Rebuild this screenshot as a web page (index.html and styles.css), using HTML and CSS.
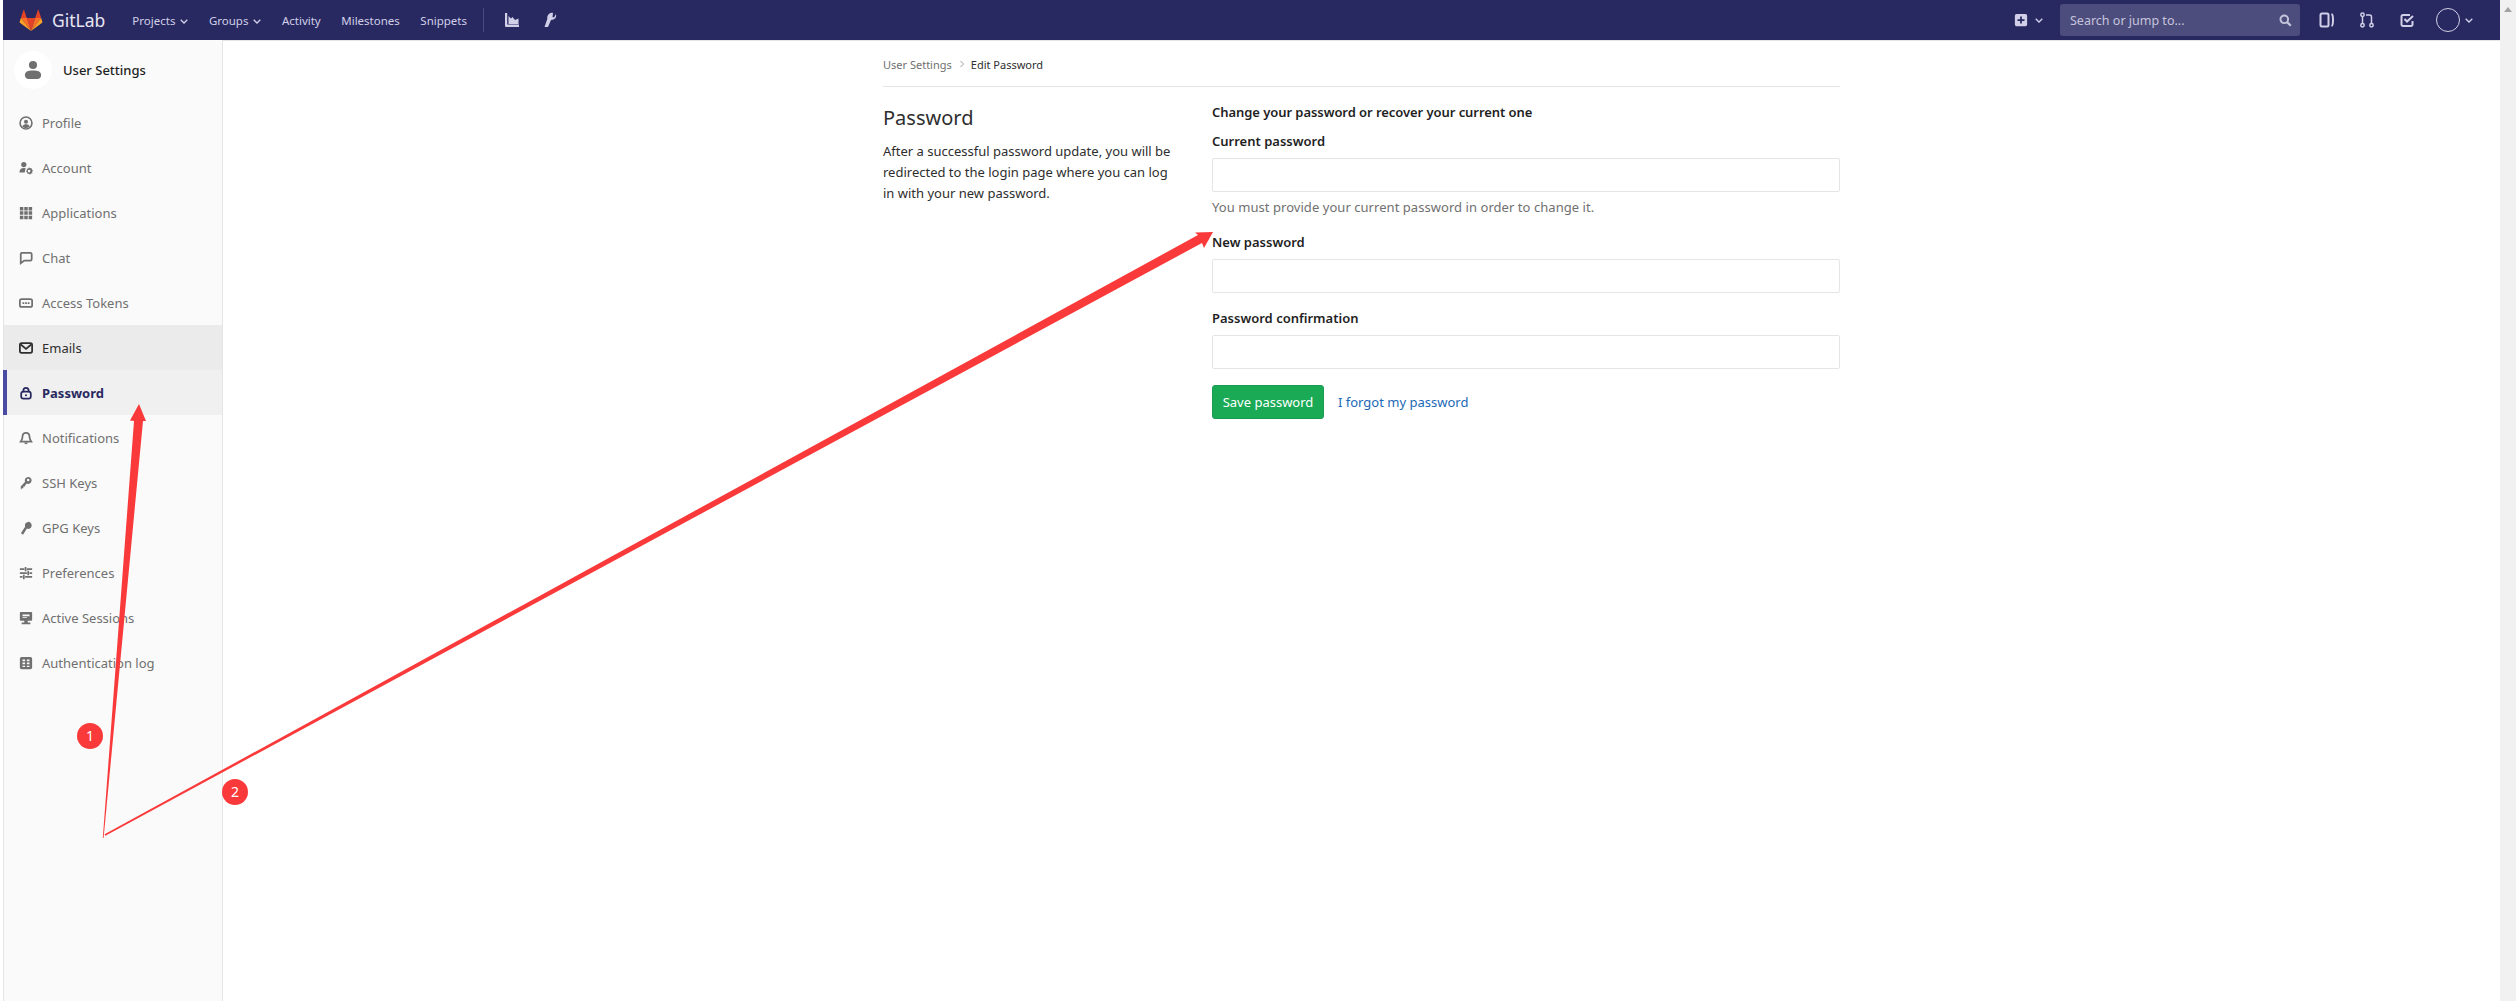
FILE: index.html
```html
<!DOCTYPE html>
<html lang="en">

<head>
    <meta charset="UTF-8">
    <title>Edit Password</title>
    <link rel="stylesheet" href="styles.css">
</head>

<body>
    <header class="navbar">
        <a class="brand">
            <svg class="brand__logo" viewBox="0 0 24 23" width="24" height="22">
                <path fill="#e24329" d="M12 23 16.400 9.400H7.600z" />
                <path fill="#fc6d26" d="M12 23 7.600 9.400H1.400z" />
                <path fill="#fca326" d="M1.400 9.400.1 13.500c-.1.4 0 .8.3 1L12 23z" />
                <path fill="#e24329" d="M1.400 9.400h6.200L4.900 1.200c-.1-.4-.7-.4-.9 0z" />
                <path fill="#fc6d26" d="M12 23l4.400-13.600h6.200z" />
                <path fill="#fca326" d="M22.600 9.400l1.300 4.100c.1.400 0 .8-.3 1L12 23z" />
                <path fill="#e24329" d="M22.600 9.400h-6.200l2.700-8.200c.1-.4.700-.4.900 0z" />
            </svg>
            <span class="brand__name">GitLab</span>
        </a>
        <nav class="nav__links">
            <a>Projects <svg class="chev" viewBox="0 0 8 5"><path d="M.7.8 4 4 7.300.8" /></svg></a>
            <a>Groups <svg class="chev" viewBox="0 0 8 5"><path d="M.7.8 4 4 7.300.8" /></svg></a>
            <a>Activity</a>
            <a>Milestones</a>
            <a>Snippets</a>
        </nav>
        <div class="nav__tools">
            <svg viewBox="0 0 16 16" width="16" height="16"><path fill="#d1d0e8" d="M1 1h2.200v11.500H15V15H2a1 1 0 0 1-1-1z" /><path fill="#d1d0e8" d="M4.500 4l2.500 2.500 1.500-1.500 2.500 3 3.500-1.500v5.500H4.500z" /></svg>
            <svg viewBox="0 0 16 16" width="16" height="16"><path fill="#d1d0e8" d="M8.500 1.500c1-.7 2.500-1 3.500-.5L11.500 5l1.500.5L15 2c.5 2 0 4.500-2.500 5.500L10 8l-3 7H3.500l2.800-8C6 5 6.500 3 8.500 1.500z" /></svg>
        </div>
        <div class="nav__right">
            <svg class="nav__plus" viewBox="0 0 16 16" width="14" height="14"><path fill="#d1d0e8" fill-rule="evenodd" d="M3 1h10a2 2 0 0 1 2 2v10a2 2 0 0 1-2 2H3a2 2 0 0 1-2-2V3a2 2 0 0 1 2-2zm4 3v3H4v2h3v3h2V9h3V7H9V4z" /></svg>
            <svg class="chev" viewBox="0 0 8 5"><path d="M.7.8 4 4 7.300.8" /></svg>
            <div class="search">
                <span>Search or jump to...</span>
                <svg viewBox="0 0 16 16" width="13" height="13"><circle cx="6.500" cy="6.500" r="4.700" fill="none" stroke="#c5c4dc" stroke-width="2.400" /><path d="M10 10l4.500 4.500" stroke="#c5c4dc" stroke-width="2.800" /></svg>
            </div>
            <svg class="nav__icon" viewBox="0 0 16 16" width="16" height="16"><rect x="1.500" y="1.500" width="8" height="13" rx="1.500" fill="none" stroke="#d1d0e8" stroke-width="2" /><path d="M12.500 2c2 .5 2 11.500 0 12" fill="none" stroke="#d1d0e8" stroke-width="2" /></svg>
            <svg class="nav__icon" viewBox="0 0 16 16" width="16" height="16"><g fill="none" stroke="#d1d0e8" stroke-width="1.500"><circle cx="3.500" cy="2.800" r="1.700" /><circle cx="3.500" cy="13.200" r="1.700" /><circle cx="12.500" cy="13.200" r="1.700" /><path d="M3.500 4.500v7M12.500 11.500V5c0-1-.5-2-2-2H7" /></g></svg>
            <svg class="nav__icon nav__icon--last" viewBox="0 0 16 16" width="16" height="16"><path d="M13.500 9v3.500a1.500 1.500 0 0 1-1.500 1.500H4a1.500 1.500 0 0 1-1.500-1.500v-8A1.500 1.500 0 0 1 4 3h7" fill="none" stroke="#d1d0e8" stroke-width="2" /><path d="M5.500 7l2.500 2.500L14 4" fill="none" stroke="#d1d0e8" stroke-width="2" /></svg>
            <span class="avatar"></span>
            <svg class="chev" viewBox="0 0 8 5"><path d="M.7.8 4 4 7.300.8" /></svg>
        </div>
    </header>

    <div class="layout">
        <aside class="sidebar">
            <div class="sidebar__head">
                <span class="sidebar__avatar">
                    <svg viewBox="0 0 20 20" width="18" height="18"><circle cx="10" cy="4.500" r="4.500" fill="#707070" /><path fill="#707070" d="M1 15.500C1 12 4 10.500 10 10.500s9 1.500 9 5c0 3-2 4.500-4 4.500H5c-2 0-4-1.500-4-4.500z" /></svg>
                </span>
                <strong>User Settings</strong>
            </div>
            <ul class="menu">
                <li><svg viewBox="0 0 16 16"><circle cx="8" cy="8" r="6.800" fill="none" stroke="currentColor" stroke-width="1.800" /><circle cx="8" cy="6.500" r="2.300" /><path d="M3.800 12c1-2 2.500-2.500 4.200-2.500s3.200.5 4.200 2.500c-1 1-2.500 1.800-4.200 1.800s-3.200-.8-4.200-1.800z" /></svg>Profile</li>
                <li><svg viewBox="0 0 16 16"><circle cx="5.500" cy="4" r="3" /><path d="M.5 13c0-3.500 2-5 5-5 1 0 1.500.2 2 .4L6.500 13z" /><path fill-rule="evenodd" d="M11.500 7l1 1.400 1.700-.3.500 1.700 1.300 1-1 1.400.3 1.700-1.700.5-1 1.400-1.100-1.300-1.700.2-.4-1.700-1.400-1 1-1.300-.2-1.700 1.700-.4zm0 3a1.500 1.500 0 1 0 0 3 1.500 1.500 0 0 0 0-3z" /></svg>Account</li>
                <li><svg viewBox="0 0 16 16"><path d="M1 1h4v4H1zM6 1h4v4H6zM11 1h4v4h-4zM1 6h4v4H1zM6 6h4v4H6zM11 6h4v4h-4zM1 11h4v4H1zM6 11h4v4H6zM11 11h4v4h-4z" /></svg>Applications</li>
                <li><svg viewBox="0 0 16 16"><path fill="none" stroke="currentColor" stroke-width="2" d="M3 2h10a1.500 1.500 0 0 1 1.500 1.500v6A1.500 1.500 0 0 1 13 11H6l-4 3V3.500A1.500 1.500 0 0 1 3 2z" /></svg>Chat</li>
                <li><svg viewBox="0 0 16 16"><rect x="1" y="3.500" width="14" height="9" rx="2" fill="none" stroke="currentColor" stroke-width="2" /><path d="M4 7h2v2H4zM7 7h2v2H7zM10 7h2v2h-2z" /></svg>Access Tokens</li>
                <li class="menu__hover"><svg viewBox="0 0 16 16"><rect x="1" y="2.500" width="14" height="11" rx="2" fill="none" stroke="currentColor" stroke-width="2" /><path fill="none" stroke="currentColor" stroke-width="2" d="M2 4l6 5 6-5" /></svg>Emails</li>
                <li class="menu__active"><svg viewBox="0 0 16 16"><rect x="2.500" y="6.500" width="11" height="8" rx="2.500" fill="none" stroke="currentColor" stroke-width="2" /><path fill="none" stroke="currentColor" stroke-width="2" d="M5 7V5a3 3 0 0 1 6 0v2" /><circle cx="8" cy="10.500" r="1.200" /></svg>Password</li>
                <li><svg viewBox="0 0 16 16"><path fill="none" stroke="currentColor" stroke-width="2" d="M8 2c2.500 0 4 2 4 4.500 0 3 1 4 2 5.500H2c1-1.500 2-2.500 2-5.500C4 4 5.500 2 8 2z" /><path d="M6 13h4a2 2 0 0 1-4 0z" /></svg>Notifications</li>
                <li><svg viewBox="0 0 16 16"><path fill-rule="evenodd" d="M10.500 1a4 4 0 1 1-1.600 7.700L7 10.500V12H5v2H3v1H2v-3l5-5.300A4 4 0 0 1 10.500 1zm0 2a1.500 1.500 0 1 0 0 3 1.500 1.500 0 0 0 0-3z" /></svg>SSH Keys</li>
                <li><svg viewBox="0 0 16 16"><path d="M10.500 1a4 4 0 1 1-1.500 7.700L5 15H3l-.5-1.500L7 6.500A4 4 0 0 1 10.500 1z" /></svg>GPG Keys</li>
                <li><svg viewBox="0 0 16 16"><path d="M1 2.500h5v2H1zM9 2.500h6v2H9zM6.500 1h2v5h-2zM1 7h8v2H1zM12 7h3v2h-3zM9.500 5.500h2v5h-2zM1 11.500h3v2H1zM7 11.500h8v2H7zM4.500 10h2v5h-2z" /></svg>Preferences</li>
                <li><svg viewBox="0 0 16 16"><path fill-rule="evenodd" d="M2 1h12a1 1 0 0 1 1 1v8a1 1 0 0 1-1 1H2a1 1 0 0 1-1-1V2a1 1 0 0 1 1-1zm2 3v2h8V4zm0 3v1h5V7zM6 11h4v2h3v2H3v-2h3z" /></svg>Active Sessions</li>
                <li><svg viewBox="0 0 16 16"><path fill-rule="evenodd" d="M3 1h10a2 2 0 0 1 2 2v10a2 2 0 0 1-2 2H3a2 2 0 0 1-2-2V3a2 2 0 0 1 2-2zm1 3v2h3V4zm5 0v2h3V4zM4 7.500v2h3v-2zm5 0v2h3v-2zM4 11v1.500h3V11zm5 0v1.500h3V11z" /></svg>Authentication log</li>
            </ul>
        </aside>

        <main class="content">
            <div class="crumbs">
                <a>User Settings</a>
                <svg class="crumbs__sep" viewBox="0 0 6 8"><path d="M1.500 1l3 3-3 3" /></svg>
                <b>Edit Password</b>
            </div>
            <div class="settings">
                <section class="settings__intro">
                    <h4>Password</h4>
                    <p>After a successful password update, you will be redirected to the login page where you can log in with your new password.</p>
                </section>
                <form class="settings__form">
                    <h5>Change your password or recover your current one</h5>
                    <label for="current">Current password</label>
                    <input type="password" id="current">
                    <p class="hint">You must provide your current password in order to change it.</p>
                    <label class="label--new" for="new">New password</label>
                    <input type="password" id="new">
                    <label class="label--confirm" for="confirm">Password confirmation</label>
                    <input type="password" id="confirm">
                    <div class="actions">
                        <button type="button">Save password</button>
                        <a>I forgot my password</a>
                    </div>
                </form>
            </div>
        </main>
    </div>

    <div class="scrollbar"><svg viewBox="0 0 8 5" width="8" height="5"><path fill="#a3a3a3" d="M4 0l4 5H0z" /></svg></div>

    <!-- annotation drawn on top of the screenshot -->
    <svg class="marks" viewBox="0 0 2516 1001" width="2516" height="1001">
        <path fill="#fa3a3a" d="M102.800 838 134 421 130 420.500 139 404 146 421 143 421 103.600 838z" />
        <path fill="#fa3a3a" d="M104.600 834.300 1198 235 1195 232.500 1213 232 1204 248 1202 243 105.400 835.700z" />
        <circle cx="90" cy="736" r="13" fill="#fa3a3a" />
        <circle cx="235" cy="792" r="13" fill="#fa3a3a" />
        <text x="90" y="741" class="marks__num">1</text>
        <text x="235" y="797" class="marks__num">2</text>
    </svg>
</body>

</html>
```

FILE: styles.css
```css
* {
    box-sizing: border-box;
}

body {
    margin: 0;
    height: 1001px;
    overflow: hidden;
    padding: 0 16px 0 3px;
    background: #fff;
    font-family: "Noto Sans", sans-serif;
    font-size: 13px;
    color: #2e2e2e;
}

ul {
    margin: 0;
    padding: 0;
    list-style: none;
}

.navbar {
    display: flex;
    align-items: center;
    height: 40px;
    padding-left: 16px;
    background: #292961;
    box-shadow: 0 1px 0 #e5e5e5;
    color: #d1d0e8;
    font-size: 11.500px;
}

.brand {
    display: flex;
    align-items: center;
    margin-right: 27px;
}

.brand__name {
    margin-left: 9px;
    font-size: 17.500px;
    color: #e6e6f2;
}

.nav__links {
    display: flex;
    gap: 20.500px;
    padding-right: 16px;
}

.chev {
    width: 8px;
    height: 5px;
    margin-left: 2px;
    vertical-align: 1px;
    fill: none;
    stroke: #d1d0e8;
    stroke-width: 1.300;
}

.nav__tools {
    display: flex;
    align-items: center;
    gap: 21px;
    height: 24px;
    padding-left: 20px;
    border-left: 1px solid #4a4a80;
}

.nav__right {
    display: flex;
    align-items: center;
    margin-left: auto;
}

.nav__plus {
    margin-right: 5px;
}

.search {
    display: flex;
    align-items: center;
    justify-content: space-between;
    width: 240px;
    height: 32px;
    margin: 0 19px 0 17px;
    padding: 0 8px 0 10px;
    border-radius: 3px;
    background: #4d4d7d;
    color: #c5c4dc;
    font-size: 12.500px;
}

.nav__icon {
    margin-right: 24px;
}

.nav__icon--last {
    margin-right: 21px;
}

.avatar {
    width: 24px;
    height: 24px;
    border: 1px solid #d1d0e8;
    border-radius: 50%;
}

.avatar + .chev {
    margin: 0 27px 0 5px;
}

.layout {
    display: flex;
    height: 961px;
}

.sidebar {
    width: 220px;
    flex: none;
    background: #fafafa;
    border-left: 1px solid #e5e5e5;
    border-right: 1px solid #e5e5e5;
}

.sidebar__head {
    display: flex;
    align-items: center;
    gap: 11px;
    height: 60px;
    padding: 0 0 0 10px;
    font-size: 13px;
    color: #1f1f1f;
}

.sidebar__head strong {
    font-weight: 500;
}

.sidebar__avatar {
    display: flex;
    align-items: center;
    justify-content: center;
    width: 38px;
    height: 38px;
    border-radius: 50%;
    background: #fff;
}

.menu li {
    display: flex;
    align-items: center;
    gap: 9px;
    height: 45px;
    padding-left: 15px;
    color: #707070;
}

.menu svg {
    width: 14px;
    height: 14px;
    flex: none;
    fill: currentColor;
}

.menu .menu__hover {
    background: #ebebeb;
    color: #2e2e2e;
}

.menu .menu__active {
    margin-left: -1px;
    padding-left: 12px;
    border-left: 4px solid #4b4ba3;
    background: #f0f0f0;
    color: #292961;
    font-weight: 700;
}

.content {
    width: 957px;
    margin-left: 660px;
}

.crumbs {
    display: flex;
    align-items: center;
    height: 47px;
    padding-top: 2px;
    font-size: 11px;
    color: #707070;
    border-bottom: 1px solid #e5e5e5;
}

.crumbs__sep {
    width: 6px;
    height: 8px;
    margin: 0 6px 0 7px;
    fill: none;
    stroke: #a0a0a0;
}

.crumbs b {
    font-weight: 400;
    color: #2e2e2e;
}

.settings {
    display: flex;
}

.settings__intro {
    width: 329px;
    flex: none;
    padding-top: 17px;
}

.settings__intro h4 {
    margin: 0 0 10px;
    font-size: 20px;
    font-weight: 400;
    line-height: 27px;
}

.settings__intro p {
    width: 290px;
    margin: 0;
    line-height: 21px;
}

.settings__form {
    flex: 1;
    padding-top: 16px;
}

.settings__form h5 {
    margin: 0 0 11px;
    font-size: 13px;
    font-weight: 600;
    line-height: 18px;
    letter-spacing: -0.060px;
    color: #1f1f1f;
}

.settings__form label {
    display: block;
    height: 18px;
    margin-bottom: 8px;
    font-weight: 600;
    line-height: 18px;
    color: #1f1f1f;
}

.settings__form input {
    display: block;
    width: 100%;
    height: 34px;
    border: 1px solid #e5e5e5;
    border-radius: 2px;
    background: #fff;
}

.hint {
    margin: 5px 0 0;
    line-height: 20px;
    letter-spacing: 0.050px;
    color: #707070;
}

.settings__form .label--new {
    margin-top: 16px;
}

.settings__form .label--confirm {
    margin-top: 16px;
}

.actions {
    display: flex;
    align-items: center;
    gap: 14px;
    margin-top: 16px;
}

.actions button {
    width: 112px;
    height: 34px;
    padding: 0;
    border: 1px solid #1a9b52;
    border-radius: 3px;
    background: #1aaa55;
    color: #fff;
    font: inherit;
}

.actions a {
    color: #1b69b6;
}

.scrollbar {
    position: absolute;
    top: 0;
    right: 0;
    display: flex;
    justify-content: center;
    width: 16px;
    height: 1001px;
    padding-top: 7px;
    background: #f1f1f1;
}

.marks {
    position: absolute;
    top: 0;
    left: 0;
    pointer-events: none;
}

.marks__num {
    font-family: "Noto Sans", sans-serif;
    font-size: 14px;
    fill: #fff;
    text-anchor: middle;
}
```
